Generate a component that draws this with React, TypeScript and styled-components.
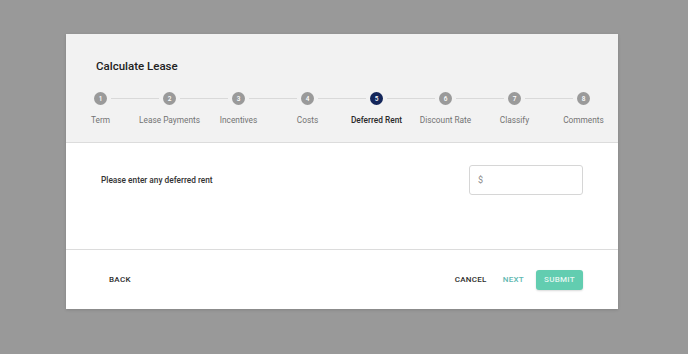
import React from 'react';
import styled, { createGlobalStyle } from 'styled-components';

const GlobalStyle = createGlobalStyle`
  html, body {
    margin: 0;
    padding: 0;
    background: #999999;
    font-family: Roboto, "Liberation Sans", sans-serif;
  }
`;

const Page = styled.div`
  width: 688px;
  height: 354px;
  box-sizing: border-box;
  padding: 34px 0 0 66px;
`;

const Modal = styled.div`
  width: 552px;
  background: #fff;
  box-shadow: 0 1px 3px rgba(0, 0, 0, 0.15);
`;

const Header = styled.div`
  background: #f2f2f2;
  padding: 22px 0 16px;
  border-bottom: 1px solid #dcdcdc;
`;

const Title = styled.h2`
  margin: 0 0 16px 30px;
  font-size: 11.5px;
  line-height: 20px;
  font-weight: 500;
  color: #222;
`;

const Steps = styled.div`
  display: grid;
  grid-template-columns: repeat(8, minmax(0, 1fr));
`;

const Step = styled.div`
  display: flex;
  flex-direction: column;
  align-items: center;
`;

const Track = styled.div`
  display: flex;
  align-items: center;
  width: 100%;
  height: 13px;
`;

const Line = styled.div<{ $side: 'left' | 'right'; $hidden?: boolean }>`
  flex: 1;
  height: 1px;
  background: ${p => (p.$hidden ? 'transparent' : '#d9d9d9')};
  margin: ${p => (p.$side === 'left' ? '0 4px 0 0' : '0 0 0 4px')};
`;

const Dot = styled.div<{ $active?: boolean }>`
  width: 13px;
  height: 13px;
  flex: none;
  border-radius: 50%;
  background: ${p => (p.$active ? '#14265a' : '#9a9a9a')};
  color: #fff;
  font-size: 6.5px;
  font-weight: 500;
  display: flex;
  align-items: center;
  justify-content: center;
`;

const Label = styled.div<{ $active?: boolean }>`
  margin-top: 9px;
  font-size: 8.3px;
  line-height: 12px;
  white-space: nowrap;
  color: ${p => (p.$active ? '#2a2a2a' : '#727272')};
  font-weight: ${p => (p.$active ? 500 : 400)};
`;

const Body = styled.div`
  height: 107px;
  box-sizing: border-box;
  padding: 22px 35px 0;
  border-bottom: 1px solid #dcdcdc;
`;

const Field = styled.div`
  display: flex;
  align-items: center;
  justify-content: space-between;
`;

const Prompt = styled.label`
  font-size: 8.3px;
  font-weight: 500;
  color: #333;
`;

const InputBox = styled.div`
  width: 114px;
  height: 30px;
  box-sizing: border-box;
  border: 1px solid #d6d6d6;
  border-radius: 3px;
  display: flex;
  align-items: center;
  padding: 0 8px;
  font-size: 9px;
  color: #8a8a8a;
`;

const Footer = styled.div`
  display: flex;
  align-items: center;
  justify-content: space-between;
  height: 59px;
  padding: 0 35px;
`;

const Actions = styled.div`
  display: flex;
  align-items: center;
`;

const Button = styled.button<{ $tone?: 'plain' | 'link' | 'primary' }>`
  border: none;
  border-radius: 3px;
  height: 20px;
  padding: 0 8px;
  margin-left: ${p => (p.$tone === 'primary' ? '4px' : '0')};
  font-family: inherit;
  font-size: 8px;
  font-weight: 500;
  letter-spacing: 0.3px;
  text-transform: uppercase;
  cursor: pointer;
  background: ${p => (p.$tone === 'primary' ? '#62cdb0' : 'transparent')};
  color: ${p =>
    p.$tone === 'primary' ? 'rgba(255,255,255,0.85)' : p.$tone === 'link' ? '#5fb8b1' : '#2e2e2e'};
  box-shadow: ${p => (p.$tone === 'primary' ? '0 1px 2px rgba(0,0,0,0.15)' : 'none')};
`;

const steps = [
  'Term',
  'Lease Payments',
  'Incentives',
  'Costs',
  'Deferred Rent',
  'Discount Rate',
  'Classify',
  'Comments',
];

const current = 4;

export default function App() {
  return (
    <>
      <GlobalStyle />
      <Page>
        <Modal>
          <Header>
            <Title>Calculate Lease</Title>
            <Steps>
              {steps.map((s, i) => (
                <Step key={s}>
                  <Track>
                    <Line $side="left" $hidden={i === 0} />
                    <Dot $active={i === current}>{i + 1}</Dot>
                    <Line $side="right" $hidden={i === steps.length - 1} />
                  </Track>
                  <Label $active={i === current}>{s}</Label>
                </Step>
              ))}
            </Steps>
          </Header>
          <Body>
            <Field>
              <Prompt>Please enter any deferred rent</Prompt>
              <InputBox>$</InputBox>
            </Field>
          </Body>
          <Footer>
            <Button>Back</Button>
            <Actions>
              <Button>Cancel</Button>
              <Button $tone="link">Next</Button>
              <Button $tone="primary">Submit</Button>
            </Actions>
          </Footer>
        </Modal>
      </Page>
    </>
  );
}
